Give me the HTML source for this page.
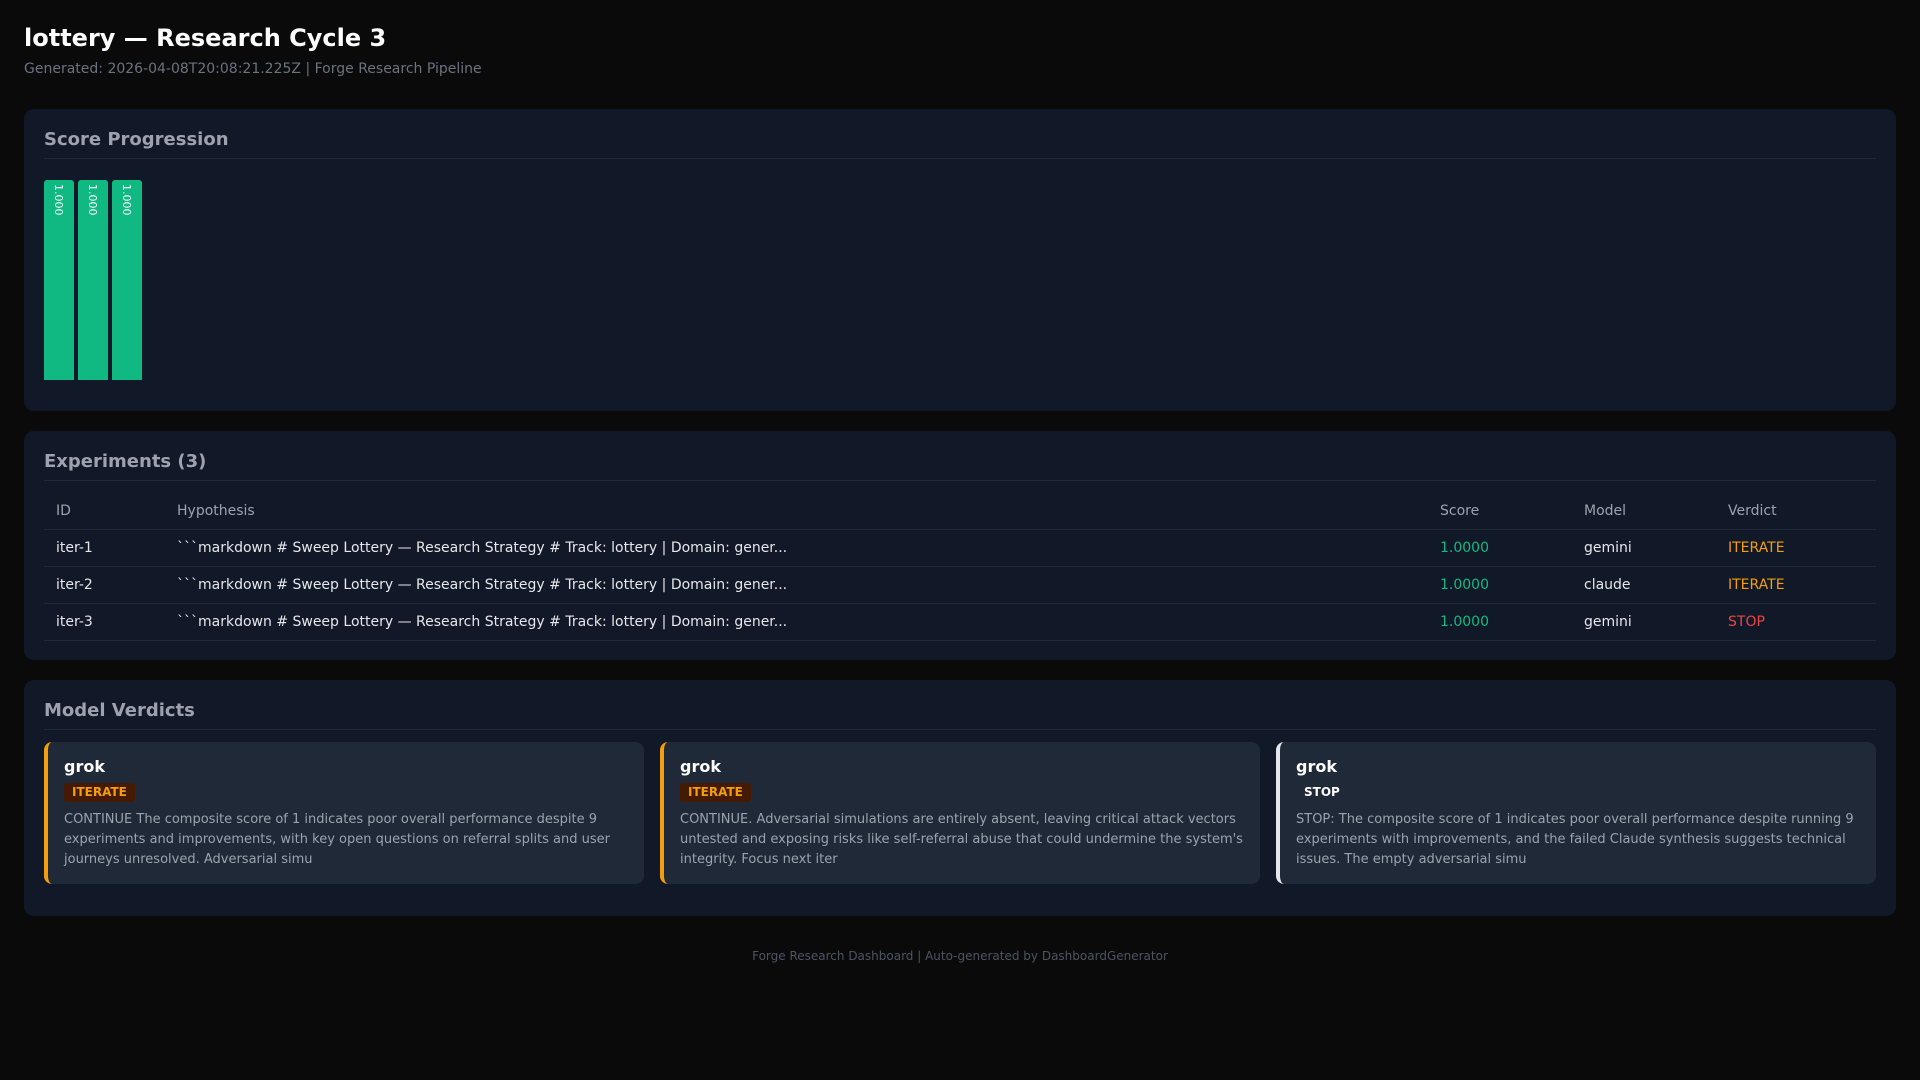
<!DOCTYPE html>
<html><head><meta charset="utf-8"><style>
*{box-sizing:border-box;margin:0;padding:0}
body{width:1920px;height:1080px;background:#0a0a0a;font-family:"DejaVu Sans","Liberation Sans",sans-serif;color:#e5e7eb;padding:24px;overflow:hidden}
h1{font-size:24px;font-weight:bold;color:#fff;line-height:28px;margin-top:0}
.sub{font-size:14px;color:#6b7280;margin-top:9px;line-height:17px}
.card{background:#111827;border-radius:10px;padding:20px;margin-top:20px}
.card h2{font-size:18px;font-weight:bold;color:#9ca3af;padding-bottom:7px;border-bottom:1px solid #1f2937;line-height:22px}
.bars{display:flex;gap:4px;margin-top:21px;height:200px;align-items:flex-end}
.bar{width:30px;height:200px;background:#10b981;border-radius:3px 3px 0 0;position:relative}
.bar span{position:absolute;top:4px;left:8px;writing-mode:vertical-rl;font-size:11px;color:#fff}
table{width:100%;border-collapse:collapse;margin-top:12px;font-size:14px;table-layout:fixed}
th{text-align:left;font-weight:normal;color:#9ca3af;padding:0 12px;height:36px;border-bottom:1px solid #1f2937}
td{padding:0 12px;height:37px;border-bottom:1px solid #1f2937;color:#e5e7eb;white-space:nowrap}
.sc{color:#10b981}.it{color:#f59e0b}.st{color:#ef4444}
.vs{display:flex;gap:16px;margin-top:12px}
.v{flex:1;background:#1f2937;border-radius:8px;border-left:4px solid #f59e0b;padding:15px 16px 16px 16px;height:142px}
.v.s{border-left-color:#e5e7eb}
.v b{display:block;font-size:16px;color:#fff;line-height:20px}
.badge{display:inline-block;font-size:12px;font-weight:bold;padding:2px 8px;border-radius:3px;margin-top:6px;background:#451a03;color:#f59e0b;line-height:15px}
.v.s .badge{background:transparent;color:#fff}
.v p{font-size:13px;color:#9ca3af;line-height:20px;margin-top:8px}
.foot{text-align:center;font-size:12px;color:#4b5563;margin-top:33px}
</style></head><body>
<h1>lottery — Research Cycle 3</h1>
<div class="sub">Generated: 2026-04-08T20:08:21.225Z | Forge Research Pipeline</div>
<div class="card" style="margin-top:31px;height:302px">
<h2>Score Progression</h2>
<div class="bars"><div class="bar"><span>1.000</span></div><div class="bar"><span>1.000</span></div><div class="bar"><span>1.000</span></div></div>
</div>
<div class="card" style="height:229px">
<h2>Experiments (3)</h2>
<table>
<colgroup><col style="width:121px"><col><col style="width:144px"><col style="width:144px"><col style="width:160px"></colgroup>
<tr><th>ID</th><th>Hypothesis</th><th>Score</th><th>Model</th><th>Verdict</th></tr>
<tr><td>iter-1</td><td>&#96;&#96;&#96;markdown # Sweep Lottery — Research Strategy # Track: lottery | Domain: gener...</td><td class="sc">1.0000</td><td>gemini</td><td class="it">ITERATE</td></tr>
<tr><td>iter-2</td><td>&#96;&#96;&#96;markdown # Sweep Lottery — Research Strategy # Track: lottery | Domain: gener...</td><td class="sc">1.0000</td><td>claude</td><td class="it">ITERATE</td></tr>
<tr><td>iter-3</td><td>&#96;&#96;&#96;markdown # Sweep Lottery — Research Strategy # Track: lottery | Domain: gener...</td><td class="sc">1.0000</td><td>gemini</td><td class="st">STOP</td></tr>
</table>
</div>
<div class="card" style="height:236px">
<h2>Model Verdicts</h2>
<div class="vs">
<div class="v"><b>grok</b><span class="badge">ITERATE</span><p>CONTINUE The composite score of 1 indicates poor overall performance despite 9 experiments and improvements, with key open questions on referral splits and user journeys unresolved. Adversarial simu</p></div>
<div class="v"><b>grok</b><span class="badge">ITERATE</span><p>CONTINUE. Adversarial simulations are entirely absent, leaving critical attack vectors untested and exposing risks like self-referral abuse that could undermine the system's integrity. Focus next iter</p></div>
<div class="v s"><b>grok</b><span class="badge">STOP</span><p>STOP: The composite score of 1 indicates poor overall performance despite running 9 experiments with improvements, and the failed Claude synthesis suggests technical issues. The empty adversarial simu</p></div>
</div>
</div>
<div class="foot">Forge Research Dashboard | Auto-generated by DashboardGenerator</div>
</body></html>
